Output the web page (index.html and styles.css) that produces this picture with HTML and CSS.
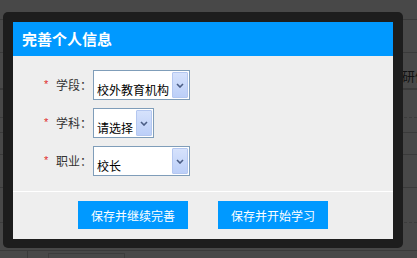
FILE: index.html
```html
<!DOCTYPE html>
<html lang="zh-CN">
<head>
<meta charset="utf-8">
<title>完善个人信息</title>
<link rel="stylesheet" href="styles.css">
</head>
<body>
<div class="page">
  <div class="bg-row h20"></div>
  <div class="bg-row h33"></div>
  <div class="bg-row h37 thick"><span class="bg-cell"></span><span class="bg-text">研修</span></div>
  <div class="bg-row h28 dashed"></div>
  <div class="bg-row h15"></div>
  <div class="bg-row h22"></div>
  <div class="bg-row h33"></div>
  <div class="bg-row h35 dashed"></div>
  <div class="bg-row h28"></div>
  <div class="bg-last"><span class="bg-box"></span></div>
</div>

<div class="dialog">
  <div class="dialog-inner">
    <div class="dialog-header">完善个人信息</div>
    <div class="dialog-body">
      <div class="form-row">
        <span class="star">*</span><span class="label">学段：</span>
        <div class="select w97"><span class="value">校外教育机构</span><span class="btn"><svg width="8" height="5" viewBox="0 0 8 5"><path d="M1 1 L4 4 L7 1" fill="none" stroke="#4b5d85" stroke-width="1.6"/></svg></span></div>
      </div>
      <div class="form-row">
        <span class="star">*</span><span class="label">学科：</span>
        <div class="select w61"><span class="value">请选择</span><span class="btn"><svg width="8" height="5" viewBox="0 0 8 5"><path d="M1 1 L4 4 L7 1" fill="none" stroke="#4b5d85" stroke-width="1.6"/></svg></span></div>
      </div>
      <div class="form-row">
        <span class="star">*</span><span class="label">职业：</span>
        <div class="select w97"><span class="value">校长</span><span class="btn"><svg width="8" height="5" viewBox="0 0 8 5"><path d="M1 1 L4 4 L7 1" fill="none" stroke="#4b5d85" stroke-width="1.6"/></svg></span></div>
      </div>
    </div>
    <div class="dialog-footer">
      <button class="btn-primary">保存并继续完善</button>
      <button class="btn-primary">保存并开始学习</button>
    </div>
  </div>
</div>
</body>
</html>
```

FILE: styles.css
```css
* { box-sizing: border-box; }
html, body { margin: 0; padding: 0; }
body {
  width: 417px;
  height: 258px;
  overflow: hidden;
  background: #484848;
  font-family: "Noto Sans CJK SC", "Liberation Sans", sans-serif;
  position: relative;
}

/* dimmed page behind the dialog */
.page { display: flex; flex-direction: column; }
.bg-row { border-bottom: 1px solid #3a3a3a; display: flex; }
.bg-row.thick { border-bottom: 2px solid #3a3a3a; }
.bg-row.dashed { border-bottom: 1px dashed #3c3c3c; }
.h20 { height: 20px; }
.h33 { height: 33px; }
.h37 { height: 37px; }
.h28 { height: 28px; }
.h15 { height: 15px; }
.h22 { height: 22px; }
.h35 { height: 35px; }
.bg-cell { width: 402px; flex: none; }
.bg-text {
  font-size: 13px;
  line-height: 13px;
  color: #111;
  padding-top: 16px;
  white-space: nowrap;
}
.bg-last { height: 10px; margin-left: 27px; border-left: 1px solid #3a3a3a; padding: 2px 0 0 20px; }
.bg-box { display: block; width: 77px; height: 8px; border: 1px solid #3c3c3c; border-bottom: none; }

/* dialog */
.dialog {
  position: absolute;
  left: 3px;
  top: 12px;
  width: 400px;
  padding: 10px 10px 9px 10px;
  background: #1d1d1d;
  border-radius: 5px;
}
.dialog-inner { background: #eeeeee; }
.dialog-header {
  height: 34px;
  background: #0099ff;
  color: #fff;
  font-size: 15px;
  font-weight: bold;
  line-height: 34px;
  padding-left: 9px;
}
.dialog-body {
  padding: 14px 0 15px 31px;
  display: flex;
  flex-direction: column;
  gap: 8px;
}
.form-row { display: flex; align-items: center; height: 30px; }
.star {
  width: 12px;
  color: #e02b2b;
  font-family: "Liberation Sans", sans-serif;
  font-size: 11px;
  line-height: 12px;
  margin-top: -3px;
}
.label {
  width: 37px;
  font-size: 12px;
  color: #333;
  line-height: 16px;
}
.select {
  height: 30px;
  border: 1px solid #7f9db9;
  background: #fff;
  display: flex;
  align-items: stretch;
  padding: 1px;
}
.w97 { width: 97px; }
.w61 { width: 61px; }
.select .value {
  flex: 1;
  font-size: 12px;
  line-height: 16px;
  color: #000;
  padding: 0 0 0 2px;
  align-self: flex-end;
  white-space: nowrap;
}
.select .btn {
  width: 16px;
  flex: none;
  background: linear-gradient(#d6e2fc, #bccff8);
  border: 1px solid #b4c7f0;
  border-radius: 1px;
  display: flex;
  align-items: center;
  justify-content: center;
}
.select .btn svg { display: block; }

.dialog-footer {
  border-top: 1px solid #ffffff;
  padding: 9px 0 10px;
  display: flex;
  justify-content: center;
  gap: 30px;
}
.btn-primary {
  width: 110px;
  height: 28px;
  border: none;
  background: #0099ff;
  color: #fff;
  font-family: "Noto Sans CJK SC", "Liberation Sans", sans-serif;
  font-size: 12px;
  padding: 0;
  cursor: pointer;
}
```
